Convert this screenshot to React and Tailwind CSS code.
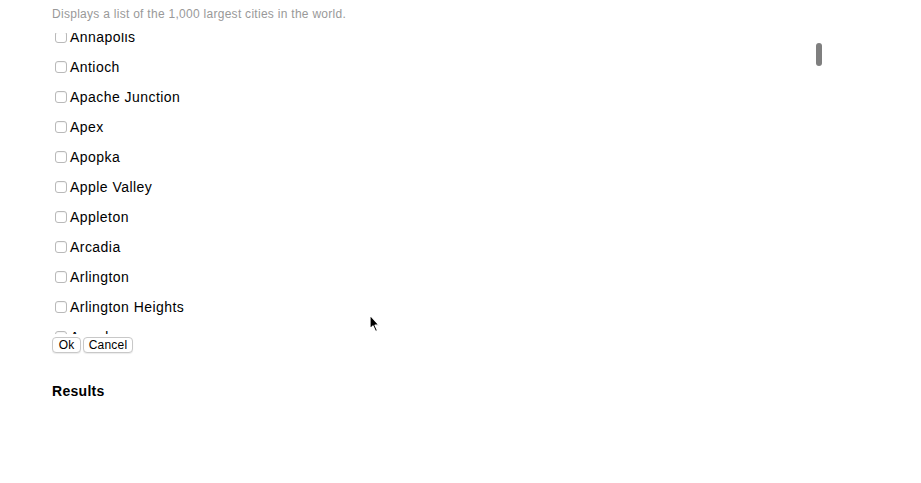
import { useEffect, useRef } from 'react'

const CITIES = [
  'Abilene', 'Akron', 'Alameda', 'Albany', 'Albuquerque', 'Alexandria', 'Alhambra',
  'Aliso Viejo', 'Allen', 'Allentown', 'Alpharetta', 'Altamonte Springs', 'Altoona',
  'Amarillo', 'Ames', 'Anaheim', 'Anchorage', 'Anderson', 'Ankeny', 'Ann Arbor',
  'Annapolis', 'Antioch', 'Apache Junction', 'Apex', 'Apopka', 'Apple Valley',
  'Appleton', 'Arcadia', 'Arlington', 'Arlington Heights', 'Arvada', 'Asheville',
  'Athens-Clarke County', 'Atlanta', 'Atlantic City', 'Attleboro', 'Auburn',
]

const FIRST = CITIES.indexOf('Annapolis')

const Cursor = () => (
  <svg className="absolute left-[366px] top-[312px]" width="14" height="22" viewBox="0 0 14 22">
    <path
      d="M4 3 L4 17 L7 14 L9.5 19.5 L11.5 18.6 L9 13.2 L13 13.2 Z"
      fill="#000"
      stroke="#fff"
      strokeWidth="1.2"
      strokeLinejoin="round"
    />
  </svg>
)

const App = () => {
  const listRef = useRef(null)

  useEffect(() => {
    // lista desplazada hasta Annapolis
    if (listRef.current) listRef.current.scrollTop = FIRST * 30 + 11
  }, [])

  return (
    <div className="relative w-[921px] h-[483px] bg-white px-[52px] pt-[6px] font-['Liberation_Sans',Arial,sans-serif] text-black overflow-hidden">
      <p className="text-[12px] leading-[16px] tracking-[0.28px] text-[#999]">
        Displays a list of the 1,000 largest cities in the world.
      </p>

      {/* Lista de ciudades */}
      <div className="relative mt-[11px] w-[774px]">
        <div ref={listRef} className="h-[301px] overflow-hidden">
          {CITIES.map((city, i) => (
            <label key={city + i} className="h-[30px] flex items-center gap-[3px]">
              <span className="ml-[3px] w-[12px] h-[12px] border border-[#b9b9b9] rounded-[3px] bg-white shadow-[inset_0_1px_1px_rgba(0,0,0,0.05)]" />
              <span className="text-[14px] leading-[18px] tracking-[0.45px]">{city}</span>
            </label>
          ))}
        </div>
        <div className="absolute right-[4px] top-[10px] w-[6px] h-[23px] rounded-full bg-[#7f7f7f]" />
      </div>

      {/* Botones */}
      <div className="mt-[3px] flex gap-[2px]">
        <button className="h-[16px] w-[29px] text-[12px] leading-[14px] border border-[#c8c8c8] rounded-[4px] bg-white shadow-[0_1px_1px_rgba(0,0,0,0.08)]">
          Ok
        </button>
        <button className="h-[16px] w-[50px] text-[12px] leading-[14px] tracking-[0.2px] border border-[#c8c8c8] rounded-[4px] bg-white shadow-[0_1px_1px_rgba(0,0,0,0.08)]">
          Cancel
        </button>
      </div>

      <h3 className="mt-[28px] text-[14px] leading-[20px] font-bold tracking-[0.3px]">Results</h3>

      <Cursor />
    </div>
  )
}

export default App
